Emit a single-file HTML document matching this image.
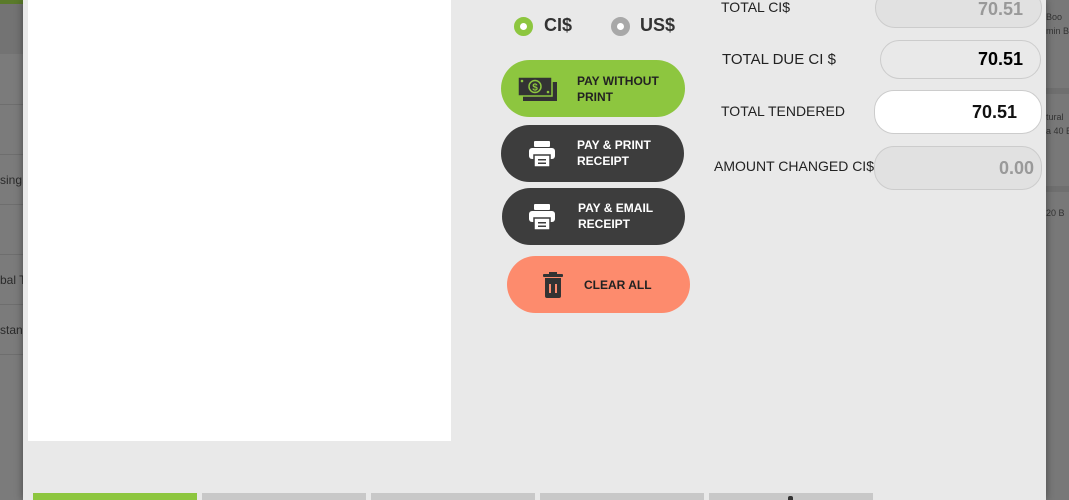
<!DOCTYPE html><html><head><style>
*{margin:0;padding:0;box-sizing:border-box}
body{width:1069px;height:500px;overflow:hidden;background:#7b7b7b;font-family:"Liberation Sans",sans-serif;position:relative}
.a{position:absolute}
.bl{background:#7d7d7d}
.ln{height:1px;background:#6e6e6e;left:0;width:23px}
.lt{font-size:12px;color:#2a2a2a;left:0}
#m{left:23px;top:0;width:1023px;height:500px;background:#e9e9e9;box-shadow:0 0 8px rgba(0,0,0,.4)}
.btn{border-radius:29px;font-weight:bold;font-size:12px;line-height:16px}
.f{border-radius:20px;border:1px solid #ccc;text-align:right;font-weight:bold;font-size:18px;padding-right:18px}
.lab{font-size:14px;color:#222}
.tab{top:493px;height:7px;width:164px;background:#c8c8c8}
</style></head><body>
<div class="a" style="left:0;top:0;width:23px;height:4px;background:#5a7a2a"></div>
<div class="a" style="left:0;top:4px;width:23px;height:50px;background:#737373"></div>
<div class="a ln" style="top:104px"></div><div class="a ln" style="top:154px"></div><div class="a ln" style="top:204px"></div><div class="a ln" style="top:254px"></div><div class="a ln" style="top:304px"></div><div class="a ln" style="top:354px"></div>
<div class="a lt" style="top:173px">sing</div>
<div class="a lt" style="top:273px">bal T</div>
<div class="a lt" style="top:323px">stan</div>
<div class="a" style="left:1046px;top:0;width:23px;height:500px;background:#787878"></div>
<div class="a" style="left:1046px;top:10px;font-size:9px;color:#333;line-height:14px;white-space:nowrap">Boo<br>min B</div>
<div class="a" style="left:1046px;top:88px;width:23px;height:6px;background:#6f6f6f"></div>
<div class="a" style="left:1046px;top:110px;font-size:9px;color:#333;line-height:14px;white-space:nowrap">tural<br>a 40 B</div>
<div class="a" style="left:1046px;top:186px;width:23px;height:6px;background:#6f6f6f"></div>
<div class="a" style="left:1046px;top:208px;font-size:9px;color:#333;white-space:nowrap">20 B</div>
<div id="m" class="a">
<div class="a" style="left:5px;top:0;width:423px;height:441px;background:#fff"></div>
</div>
<div class="a" style="left:514px;top:17px;width:19px;height:19px;border-radius:50%;border:6px solid #8dc63f;background:#fff"></div>
<div class="a" style="left:544px;top:15px;font-size:18px;font-weight:bold;color:#333">CI$</div>
<div class="a" style="left:611px;top:17px;width:19px;height:19px;border-radius:50%;border:6px solid #a8a8a8;background:#fff"></div>
<div class="a" style="left:640px;top:15px;font-size:18px;font-weight:bold;color:#333">US$</div>
<div class="a btn" style="left:501px;top:60px;width:184px;height:57px;background:#8dc63f;color:#222">
<svg class="a" style="left:17px;top:15px" width="40" height="28" viewBox="0 0 40 28"><rect x="5" y="7" width="34" height="19" fill="#333"/><rect x="0" y="2" width="34" height="19" fill="#333" stroke="#8dc63f" stroke-width="1.5"/><circle cx="17" cy="11.5" r="6" fill="none" stroke="#8dc63f" stroke-width="1.5"/><text x="17" y="15.5" font-size="10" font-weight="bold" text-anchor="middle" fill="#8dc63f" font-family="Liberation Sans">$</text><circle cx="4" cy="6" r="1.3" fill="#8dc63f"/><circle cx="30" cy="17" r="1.3" fill="#8dc63f"/></svg>
<div class="a" style="left:76px;top:13px">PAY WITHOUT<br>PRINT</div></div>
<div class="a btn" style="left:501px;top:125px;width:183px;height:57px;background:#3d3d3d;color:#fff">
<svg class="a" style="left:27px;top:15px" width="28" height="28" viewBox="0 0 28 28"><rect x="6" y="1" width="16" height="6" rx="1" fill="#fff"/><rect x="1" y="8" width="26" height="11" rx="3" fill="#fff"/><rect x="6" y="15" width="16" height="12" fill="#fff" stroke="#3d3d3d" stroke-width="1.5"/><rect x="10" y="19" width="8" height="1.5" fill="#3d3d3d"/><rect x="10" y="22.5" width="8" height="1.5" fill="#3d3d3d"/></svg>
<div class="a" style="left:76px;top:12px">PAY &amp; PRINT<br>RECEIPT</div></div>
<div class="a btn" style="left:502px;top:188px;width:183px;height:57px;background:#3d3d3d;color:#fff">
<svg class="a" style="left:26px;top:15px" width="28" height="28" viewBox="0 0 28 28"><rect x="6" y="1" width="16" height="6" rx="1" fill="#fff"/><rect x="1" y="8" width="26" height="11" rx="3" fill="#fff"/><rect x="6" y="15" width="16" height="12" fill="#fff" stroke="#3d3d3d" stroke-width="1.5"/><rect x="10" y="19" width="8" height="1.5" fill="#3d3d3d"/><rect x="10" y="22.5" width="8" height="1.5" fill="#3d3d3d"/></svg>
<div class="a" style="left:76px;top:12px">PAY &amp; EMAIL<br>RECEIPT</div></div>
<div class="a btn" style="left:507px;top:256px;width:183px;height:57px;background:#fd8b6d;color:#222">
<svg class="a" style="left:35px;top:16px" width="22" height="26" viewBox="0 0 22 26"><rect x="1" y="2" width="20" height="3" rx="1" fill="#333"/><rect x="7" y="0" width="8" height="3" fill="#333"/><path d="M3 6h16v18a2 2 0 0 1-2 2H5a2 2 0 0 1-2-2z" fill="#333"/><rect x="7" y="12" width="2" height="9" fill="#fd8b6d"/><rect x="13" y="12" width="2" height="9" fill="#fd8b6d"/></svg>
<div class="a" style="left:77px;top:21px">CLEAR ALL</div></div>
<div class="a lab" style="left:721px;top:-1px">TOTAL CI$</div>
<div class="a f" style="left:875px;top:-12px;width:167px;height:40px;background:#e1e1e1;color:#999;line-height:36px;padding-top:2px">70.51</div>
<div class="a lab" style="left:722px;top:51px;font-size:15px">TOTAL DUE CI $</div>
<div class="a f" style="left:880px;top:40px;width:161px;height:39px;background:#e9e9e9;color:#000;line-height:37px;padding-right:17px">70.51</div>
<div class="a lab" style="left:721px;top:103px">TOTAL TENDERED</div>
<div class="a f" style="left:874px;top:90px;width:168px;height:44px;background:#fff;color:#111;line-height:42px;padding-right:24px">70.51</div>
<div class="a lab" style="left:714px;top:158px">AMOUNT CHANGED CI$</div>
<div class="a f" style="left:874px;top:146px;width:168px;height:44px;background:#e1e1e1;color:#999;line-height:42px;padding-right:7px">0.00</div>
<div class="a tab" style="left:33px;background:#8dc63f"></div>
<div class="a tab" style="left:202px"></div>
<div class="a tab" style="left:371px"></div>
<div class="a tab" style="left:540px"></div>
<div class="a tab" style="left:709px"></div>
<div class="a" style="left:788px;top:496px;width:5px;height:4px;border-radius:2px 2px 0 0;background:#333"></div>
</body></html>
